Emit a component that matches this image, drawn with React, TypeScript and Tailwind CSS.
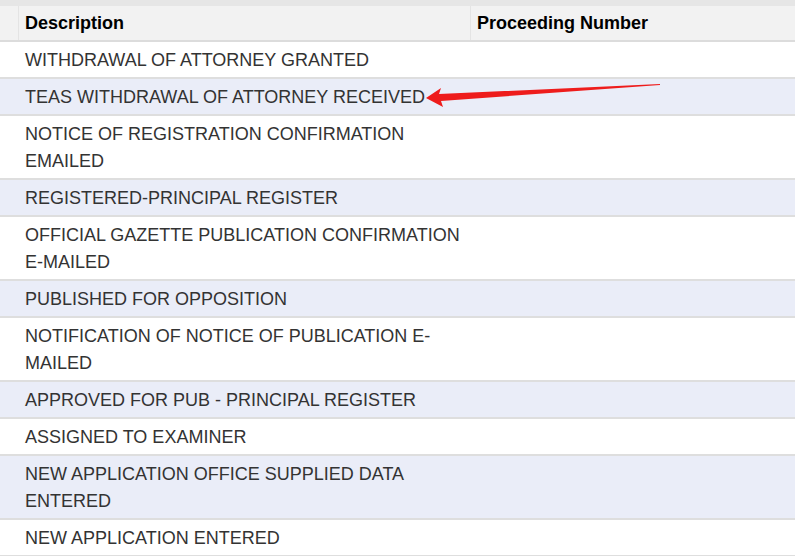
const rows: string[][] = [
  ["WITHDRAWAL OF ATTORNEY GRANTED"],
  ["TEAS WITHDRAWAL OF ATTORNEY RECEIVED"],
  ["NOTICE OF REGISTRATION CONFIRMATION", "EMAILED"],
  ["REGISTERED-PRINCIPAL REGISTER"],
  ["OFFICIAL GAZETTE PUBLICATION CONFIRMATION", "E-MAILED"],
  ["PUBLISHED FOR OPPOSITION"],
  ["NOTIFICATION OF NOTICE OF PUBLICATION E-", "MAILED"],
  ["APPROVED FOR PUB - PRINCIPAL REGISTER"],
  ["ASSIGNED TO EXAMINER"],
  ["NEW APPLICATION OFFICE SUPPLIED DATA", "ENTERED"],
  ["NEW APPLICATION ENTERED"],
];

const App = () => {
  return (
    <div className="relative w-[795px] h-[556px] overflow-hidden bg-white font-['Liberation_Sans',Arial,sans-serif] text-[18px]">
      <div className="bg-[#e6e6e6] pt-[6px]">
        <div className="grid grid-cols-[19px_452px_1fr] bg-[#f2f2f2] border-b-2 border-[#dcdcdc] font-bold text-black leading-[27px]">
          <div className="border-r border-[#e4e4e4]" />
          <div className="border-r border-[#e4e4e4] px-[6px] py-[3.5px]">Description</div>
          <div className="px-[6px] py-[3.5px]">Proceeding Number</div>
        </div>
      </div>

      {rows.map((lines, i) => (
        <div
          key={i}
          className={
            "grid grid-cols-[19px_452px_1fr] border-b-2 border-[#dedede] leading-[27px] text-[#333333] " +
            (i % 2 === 1 ? "bg-[#eaedf8]" : "bg-white")
          }
        >
          <div />
          <div className="px-[6px] pt-[5px] pb-[3px]">
            {lines.map((l, j) => (
              <div key={j} className="whitespace-nowrap">{l}</div>
            ))}
          </div>
          <div />
        </div>
      ))}

      {/* red annotation arrow */}
      <svg className="absolute left-0 top-0" width="795" height="556" viewBox="0 0 795 556">
        <polygon
          points="426,98 441,88 439,94 660,84 660,85 441,101 443,107"
          fill="#ee1c1c"
        />
      </svg>
    </div>
  );
};

export default App;
